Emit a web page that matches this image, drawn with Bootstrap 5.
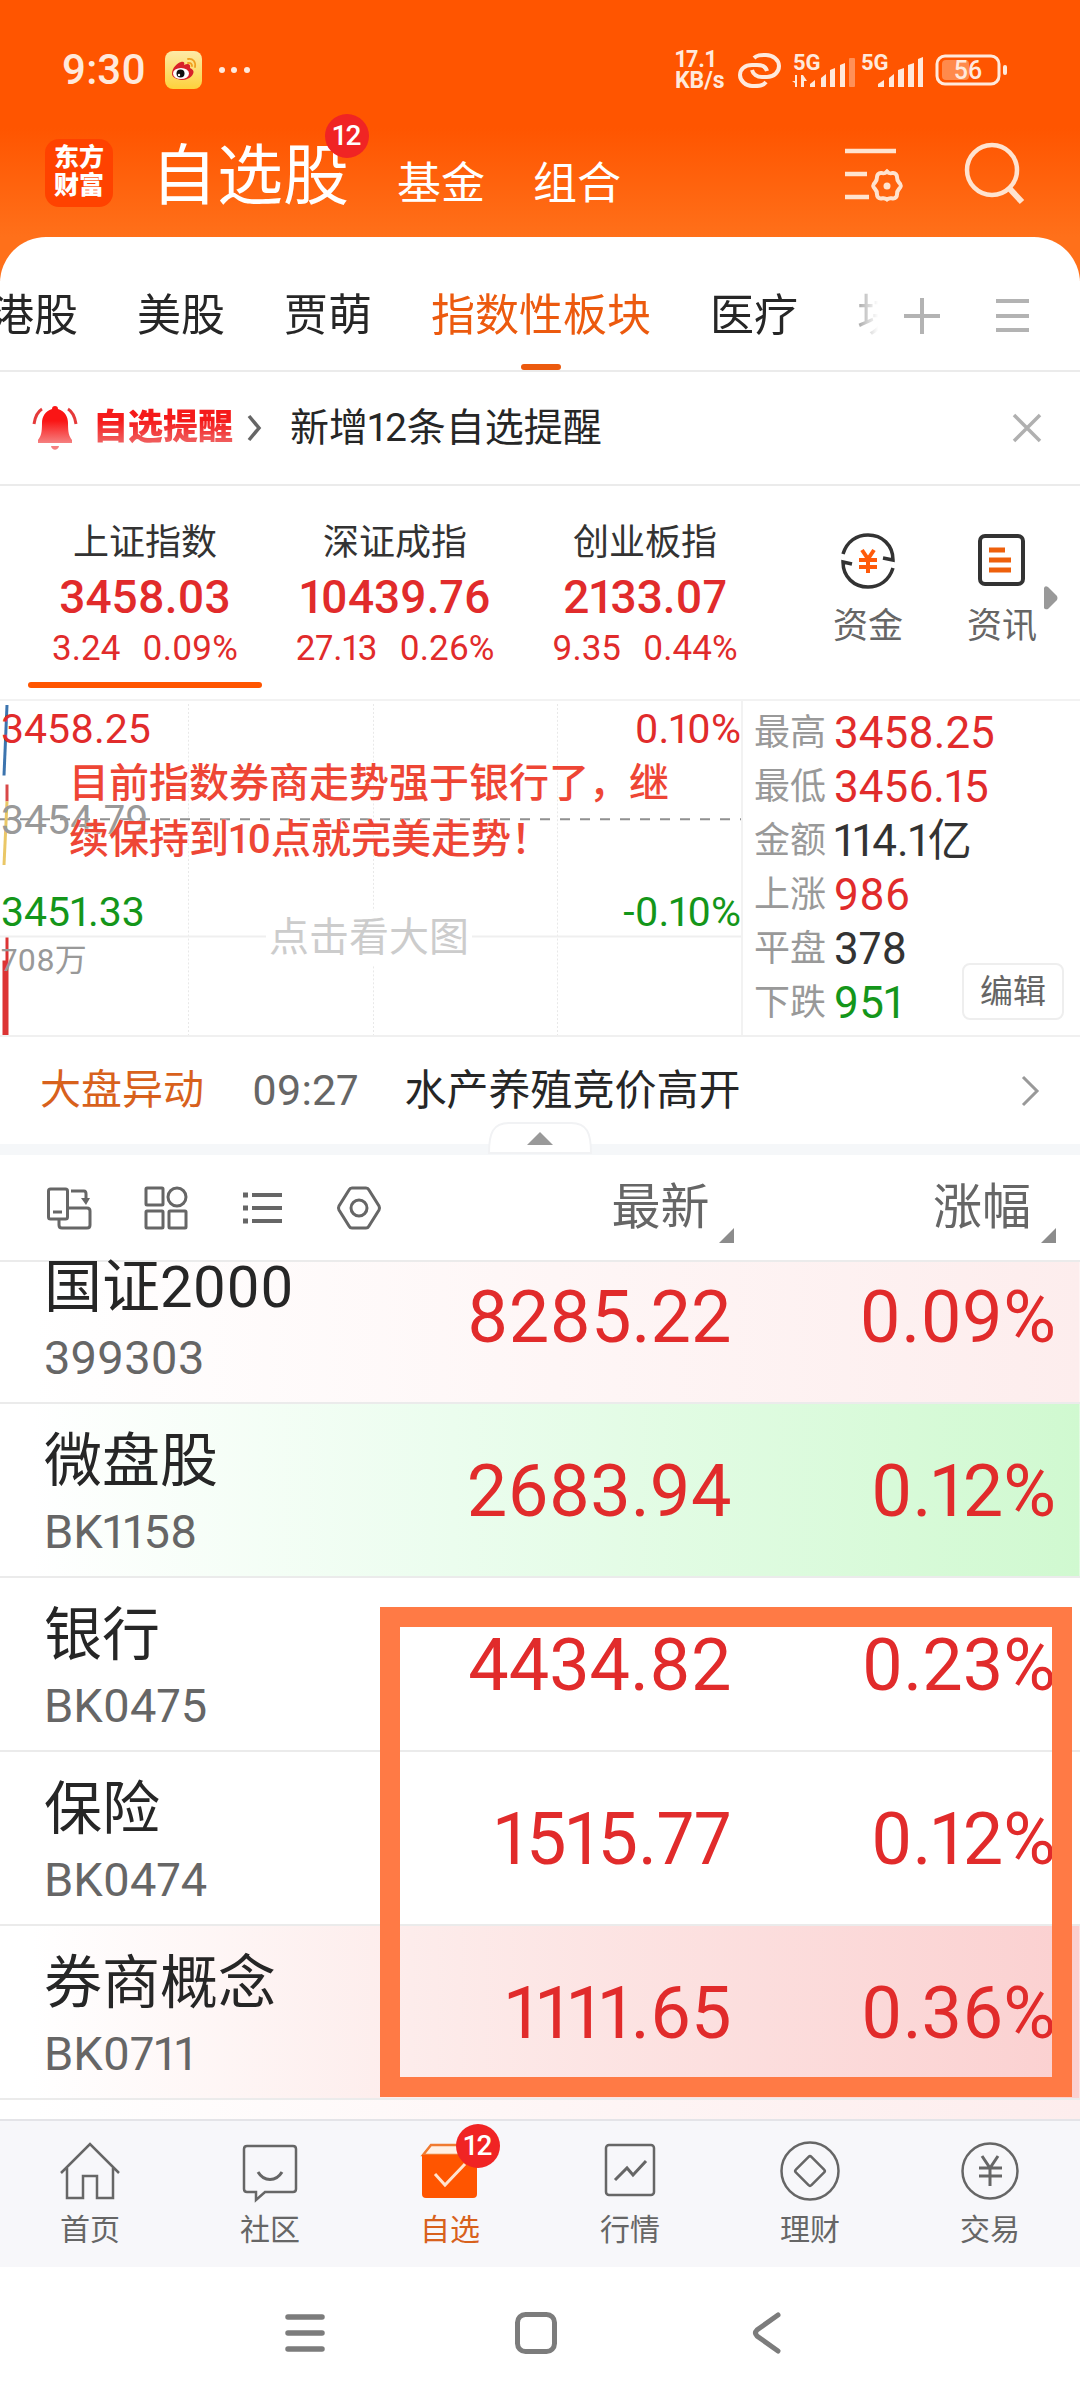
<!DOCTYPE html>
<html lang="zh-CN">
<head>
<meta charset="utf-8">
<meta name="viewport" content="width=device-width, initial-scale=1">
<title>自选股</title>
<link href="https://cdn.jsdelivr.net/npm/bootstrap@5.3.0/dist/css/bootstrap.min.css" rel="stylesheet">
<style>
:root{--up:#e12b2b;--down:#14961a;--ink:#262626;--mute:#666;--soft:#999;--brand:#ff5500;--rule:#ebebeb}
body{font-family:Roboto,"Noto Sans CJK SC",sans-serif;color:var(--ink);background:#fff;font-variant-numeric:proportional-nums}
svg{display:block;flex:none;overflow:visible}
a{color:inherit;text-decoration:none}
button{font:inherit;color:inherit;background:none;border:0;padding:0}
.up{color:var(--up)}.down{color:var(--down)}
.top-zone{background:linear-gradient(#ff5500 0,#ff5500 128px,#ff701a 237px);color:#fff;padding-bottom:44px}
.status{height:100px;padding:40px 71px 0 62px;color:#ffe9dc}
.clock{font-size:42px;line-height:60px;font-weight:500;margin-right:19px}
.rate{font-size:23px;line-height:21px;font-weight:700;width:52px}
.brand-row{height:137px;padding:9px 53px 0 45px}
.logo{width:68px;height:68px;border-radius:14px;background:#ff4200;font-size:25px;line-height:28px;font-weight:900;text-align:center;padding-top:5px}
.modes{gap:48px;margin-left:38px;padding-top:14px;font-size:44px;line-height:76px}
.modes .current{font-size:66px}
.dot{position:absolute;width:44px;height:44px;border-radius:50%;background:#f02424;color:#fff;font-size:28px;line-height:44px;font-weight:500;text-align:center}
.modes .dot{left:174px;top:-25px}
.find{margin-left:60px}
.sheet{background:#fff;border-radius:46px 46px 0 0;margin-top:-44px}
.tabs{height:135px;border-bottom:2px solid var(--rule);padding-right:49px}
.tab-strip{gap:59px;flex:1 1 0;min-width:0;margin-left:-10px;font-size:44px;line-height:106px;white-space:nowrap;padding-top:26px;overflow:hidden;height:133px;-webkit-mask-image:linear-gradient(90deg,#000 calc(100% - 50px),transparent);mask-image:linear-gradient(90deg,#000 calc(100% - 50px),transparent)}
.tab-strip .on{color:#ec5a0e;position:relative;height:107px}
.tab-strip .on::after{content:"";position:absolute;left:50%;margin-left:-20px;bottom:0;width:40px;height:6px;border-radius:3px;background:#ec5a0e}
.tab-btn{margin-top:20px}
.tab-btn+.tab-btn{margin-left:52px}
.alert-row{height:114px;border-bottom:2px solid var(--rule);padding:0 38px 0 32px;font-size:39px}
.alert-name{font-size:35px;font-weight:900;background:linear-gradient(#f51a1a 35%,#f05a5a 75%);-webkit-background-clip:text;background-clip:text;color:transparent;margin:0 14px 0 15px;line-height:50px}
.alert-text{margin-left:27px}
.indices{height:215px;padding-left:20px;border-bottom:2px solid #f2f2f2}
.index-item{width:250px;padding-top:32px;text-align:center;position:relative}
.index-item .nm{font-size:36px;line-height:50px;color:#333}
.index-item .val{font-size:46px;line-height:56px;font-weight:500;padding-top:1px}
.index-item .chg{font-size:35px;line-height:46px;gap:22px;padding-top:1px}
.index-item.on::after{content:"";position:absolute;left:8px;right:8px;bottom:11px;height:6px;border-radius:3px;background:var(--brand)}
.tool{font-size:35px;line-height:50px;color:var(--mute);width:72px;text-align:center}
.tool svg{margin:0 auto 12px}
.tools{padding:46px 42px 0 0;gap:62px;position:relative}
.tools .more{position:absolute;right:22px;top:99px}
.market{height:336px;border-bottom:2px solid #f0f0f0}
.chart{flex:0 0 743px;border-right:2px solid #f2f2f2;position:relative;font-size:41px;line-height:44px}
.chart svg{width:100%;height:100%}
.chart span{position:absolute}
.lab-l{left:1px}.lab-r{right:0}
.y1{top:6px}.y2{top:97px}.y3{top:189px}
.flat{color:var(--soft)}
.vol{top:237px;font-size:32px;color:var(--soft)}
.note{left:69px;top:55px;font-size:40px;font-weight:500;color:#ee4635;line-height:56px;white-space:nowrap;text-shadow:0 0 2px #fff}
.hint{left:266px;top:210px;line-height:54px;color:#ccc;background:#fff;padding:0 3px;font-size:40px}
.stats{padding:5px 0 0 11px;position:relative}
.stats div{line-height:54px;font-size:36px;color:var(--soft);display:flex;align-items:center;gap:8px}
.stats dt,.stats dd{margin:0;font-weight:400}
.stats dd{font-size:44px}
.ink{color:#333}
.edit{position:absolute;right:16px;bottom:15px;width:102px;height:57px;border:2px solid #eee;border-radius:8px;background:#fff;font-size:33px;line-height:52px;color:var(--mute)}
.news{height:107px;padding:0 40px;font-size:42px}
.news .tag{font-size:41px;color:#d8611c;margin-right:48px}
.news .hour{font-size:43px;color:var(--mute);margin-right:46px}
.band{height:11px;background:#f5f7f9;position:relative}
.handle{position:absolute;left:50%;margin-left:-53px;top:-23px}
.watch{position:relative}
.watch table{width:100%;table-layout:fixed;border-collapse:separate;border-spacing:0}
.watch th,.watch td{padding:0;font-weight:400;vertical-align:top;border-bottom:2px solid #ebebeb}
.watch thead th{height:107px;padding-top:18px;color:var(--mute);font-size:49px;line-height:70px}
.icons{padding-left:46px;gap:52px;height:70px}
.sort{gap:10px;align-items:flex-end;margin-left:auto}
.watch tbody th{padding:32px 0 14px 44px}
.watch tbody td{padding-top:43px;text-align:right;font-size:72px;line-height:90px;color:var(--up)}
.watch tr>:last-child{padding-right:24px}
.watch tbody td:nth-child(2){padding-right:3px}
.watch tbody tr:first-child th{padding-top:0}
.watch tbody tr:first-child td{padding-top:11px}
.watch .nm{font-size:58px;line-height:50px}
.watch .code{font-size:47px;line-height:60px;padding-top:16px;color:var(--mute);display:block}
.tint-r1{background:linear-gradient(90deg,#fff 3%,#fdeded)}
.tint-g{background:linear-gradient(90deg,#fff 3%,#ebfdee 42%,#d0f9d0)}
.tint-r2{background:linear-gradient(90deg,#fff 3%,#fdeceb 38%,#fbd0d0)}
.peek{height:19px}
.frame{position:absolute;left:380px;right:8px;top:452px;bottom:22px;border:20px solid #ff7a45;pointer-events:none}
.dock{height:148px;border-top:2px solid #e4e4e8;background:#f7f7fa;color:var(--mute);font-size:30px;line-height:40px}
.dock a{flex:1 1 0;text-align:center;position:relative;padding-top:20px}
.dock svg{margin:0 auto 9px}
.dock .dot{left:50%;margin-left:6px;top:3px}
.dock .on{color:#d8611c}
.sys{height:132px;gap:189px;padding-right:9px}
</style>
<script src="https://cdn.jsdelivr.net/npm/bootstrap@5.3.0/dist/js/bootstrap.bundle.min.js"></script>
</head>
<body>
<header class="top-zone">
  <div class="status d-flex align-items-center">
    <span class="clock">9:30</span>
    <svg width="37" height="38" viewBox="0 0 37 38"><defs><linearGradient id="wb" x2="0" y2="1"><stop stop-color="#fdeaa8"/><stop offset="1" stop-color="#fdd23c"/></linearGradient></defs><rect width="37" height="38" rx="8" fill="url(#wb)"/><path d="M7 23c0-6 5-11 9-12 3-1 4 1 3 3 4-2 7-1 6 3 4 2 4 4 3 6-2 4-7 6-12 6-5-1-9-3-9-6z" fill="#d8202a"/><ellipse cx="16" cy="22.500" rx="8" ry="5.500" fill="#fff"/><circle cx="15.500" cy="22.500" r="4" fill="#111"/><circle cx="14" cy="24" r="1.200" fill="#fff"/><path d="M23 8c5-1 8 3 7 8M23 12c3-.5 4 1 4 3" fill="none" stroke="#f0a020" stroke-width="1.800" stroke-linecap="round"/></svg>
    <svg width="50" height="10" viewBox="0 0 50 10" fill="#ffe9dc"><circle cx="20" cy="5" r="3"/><circle cx="32" cy="5" r="3"/><circle cx="45" cy="5" r="3"/></svg>
    <div class="d-flex align-items-center ms-auto">
      <div class="rate">17.1<br>KB/s</div>
      <svg class="ms-2" width="46" height="36" viewBox="6 0 46 36" fill="none" stroke="#ffe9dc" stroke-width="4"><path d="M25 6c3-3 6-3 12-3 7 0 13 5 13 11s-5 11-12 11h-5c-5 0-9-3-10-7"/><path d="M37 30c-3 4-7 4-14 4-6 0-12-5-12-11s5-10 12-10h5c5 0 9 2 10 6"/></svg>
      <svg class="ms-2" width="70" height="36" viewBox="0 0 70 36" fill="#ffe9dc"><text x="4" y="18" font-size="22" font-weight="700">5G</text><path d="M8 23v12h-2v-4l-3-2h3v-6zM12 23h2l4 6h-3v6h-3z"/><path d="M21 35v-3l5-4v7zM32 35v-9l5-4v13zM41 35V18l5-2v19zM51 35V13l5-2v24z"/><rect x="60" y="6" width="6" height="29" rx="1" opacity=".4"/></svg>
      <svg class="me-1" width="70" height="36" viewBox="0 0 70 36" fill="#ffe9dc"><text x="2" y="18" font-size="22" font-weight="700">5G</text><path d="M19 35v-3l6-4v7zM30 35v-9l5-4v13zM39 35V18l6-2v19zM49 35V13l6-2v24zM59 35V7l5-2v30z"/></svg>
      <svg width="76" height="34" viewBox="0 0 76 34"><rect x="4" y="3" width="62" height="28" rx="8" fill="none" stroke="#ffe9dc" stroke-width="3"/><rect x="9" y="7" width="27" height="20" rx="4" fill="#ff8a4c"/><rect x="70" y="12" width="4" height="10" rx="2" fill="#ffe9dc"/><text x="35" y="26" text-anchor="middle" font-size="25" font-weight="500" fill="#ffe9dc">56</text></svg>
    </div>
  </div>
  <div class="brand-row d-flex align-items-center">
    <div class="logo">东方<br>财富</div>
    <nav class="modes d-flex align-items-baseline">
      <a href="#" class="current position-relative">自选股<span class="dot">12</span></a>
      <a href="#">基金</a>
      <a href="#">组合</a>
    </nav>
    <button class="ms-auto" aria-label="筛选设置"><svg width="60" height="60" viewBox="0 0 60 60" fill="none" stroke="#ffe3cf" stroke-width="4.500"><path d="M2 8h51M2 31h22M2 54h24"/><path d="M44 28.500c2.500 2.500 3 2 5.500 1.500 3-.5 4.500 2 4.500 4 0 3 0 3.500 2 5.500 2.500 2.500 2.500 4 0 6.500-2 2-2 2.500-2 5.500 0 2-1.500 4.500-4.500 4-2.500-.5-3-1-5.500 1-2.500-2-3-1.500-5.500-1-3 .5-4.500-2-4.500-4 0-3 0-3.500-2-5.500-2.500-2.500-2.500-4 0-6.500 2-2 2-2.500 2-5.500 0-2 1.500-4.500 4.500-4 2.500.5 3 1 5.500-1.500z" stroke-width="4"/><circle cx="44" cy="43" r="3.500" fill="#ffe3cf" stroke="none"/></svg></button>
    <button class="find" aria-label="搜索"><svg width="64" height="64" viewBox="0 0 64 64" fill="none" stroke="#ffe3cf" stroke-width="4.500"><circle cx="29" cy="29" r="25"/><path d="M46 47l13 14" stroke-width="6"/></svg></button>
  </div>
</header>

<main class="sheet">
  <div class="tabs d-flex align-items-center">
    <nav class="tab-strip d-flex">
      <a href="#">港股</a><a href="#">美股</a><a href="#">贾萌</a><a href="#" class="on">指数性板块</a><a href="#">医疗</a><a href="#">块</a>
    </nav>
    <button class="tab-btn ms-4" aria-label="添加分组"><svg width="40" height="40" viewBox="0 0 40 40" stroke="#b3b3b3" stroke-width="4"><path d="M2 22h36M20 4v36"/></svg></button>
    <button class="tab-btn" aria-label="分组列表"><svg width="37" height="40" viewBox="0 0 37 40" stroke="#b3b3b3" stroke-width="4"><path d="M2 7h33M2 22h33M2 36h33"/></svg></button>
  </div>

  <div class="alert-row d-flex align-items-center">
    <svg width="46" height="46" viewBox="0 0 46 46"><defs><linearGradient id="bl" x2="0" y2="1"><stop offset=".4" stop-color="#fa1515"/><stop offset="1" stop-color="#f58080"/></linearGradient></defs><path d="M23 1c2 0 3 1 3 3 7 2 10 8 10 14 0 10 1 13 4 17v3H6v-3c3-4 4-7 4-17C10 12 13 6 20 4c0-2 1-3 3-3z" fill="url(#bl)"/><path d="M19 41h8c-1 5-7 5-8 0z" fill="#f58080"/><path d="M10 4C5 7 3 12 2 19M36 4c5 3 7 8 8 15" fill="none" stroke="#e53a3a" stroke-width="3"/></svg>
    <span class="alert-name">自选提醒</span>
    <svg width="16" height="28" viewBox="0 0 16 28" fill="none" stroke="#666" stroke-width="3.500"><path d="M2 2l10 12L2 26"/></svg>
    <span class="alert-text">新增12条自选提醒</span>
    <button class="ms-auto" aria-label="关闭"><svg width="30" height="30" viewBox="0 0 30 30" stroke="#b0b0b0" stroke-width="3.500"><path d="M2 2l26 26M28 2L2 28"/></svg></button>
  </div>

  <div class="indices d-flex">
    <a href="#" class="index-item on"><div class="nm">上证指数</div><div class="val up">3458.03</div><div class="chg up d-flex justify-content-center"><span>3.24</span><span>0.09%</span></div></a>
    <a href="#" class="index-item"><div class="nm">深证成指</div><div class="val up">10439.76</div><div class="chg up d-flex justify-content-center"><span>27.13</span><span>0.26%</span></div></a>
    <a href="#" class="index-item"><div class="nm">创业板指</div><div class="val up">2133.07</div><div class="chg up d-flex justify-content-center"><span>9.35</span><span>0.44%</span></div></a>
    <div class="tools d-flex ms-auto align-items-start">
      <a href="#" class="tool"><svg width="58" height="58" viewBox="0 0 58 58" fill="none"><g stroke="#333" stroke-width="3.500"><path d="M4 22C8 9 18 3 29 3c14 0 25 10 25 25l-10-2M54 36C50 49 40 55 29 55 15 55 4 45 4 30l9 2"/></g><path d="M23 18l6 9 6-9M20 28h18M20 35h18M29 27v14" stroke="#ff5a0a" stroke-width="4"/></svg>资金</a>
      <a href="#" class="tool"><svg width="58" height="58" viewBox="0 0 58 58" fill="none"><rect x="7" y="4" width="43" height="48" rx="5" stroke="#333" stroke-width="4"/><path d="M16 18h16M16 28h22M16 38h22" stroke="#ee600c" stroke-width="5"/></svg>资讯</a>
      <svg class="more" width="14" height="26" viewBox="0 0 14 26"><path d="M0 3q1-3 4-1l9 9q1 2 0 4l-9 9q-3 1-4-1z" fill="#999"/></svg>
    </div>
  </div>

  <div class="market d-flex">
    <div class="chart">
      <svg viewBox="0 0 741 336" preserveAspectRatio="none" fill="none">
        <path d="M188.500 3v333M373.500 3v333M557.500 3v333" stroke="#e8e8e8" stroke-width="1" stroke-dasharray="2 2"/>
        <path d="M0 237h741" stroke="#efefef" stroke-width="2"/>
        <path d="M0 119h741" stroke="#909090" stroke-width="2" stroke-dasharray="10 10"/>
        <path d="M7 4L4 75" stroke="#3c74ae" stroke-width="3"/>
        <path d="M7 84v17" stroke="#d84848" stroke-width="3"/>
        <path d="M7 101L4 165" stroke="#eac766" stroke-width="3"/>
        <path d="M7 238v98M4 261v75" stroke="#dc3434" stroke-width="3"/>
      </svg>
      <span class="lab-l y1 up">3458.25</span><span class="lab-r y1 up">0.10%</span>
      <span class="lab-l y2 flat">3454.79</span>
      <span class="lab-l y3 down">3451.33</span><span class="lab-r y3 down">-0.10%</span>
      <span class="lab-l vol">708万</span>
      <span class="hint">点击看大图</span>
      <span class="note">目前指数券商走势强于银行了，继<br>续保持到10点就完美走势！</span>
    </div>
    <dl class="stats flex-grow-1 mb-0">
      <div><dt>最高</dt><dd class="up">3458.25</dd></div>
      <div><dt>最低</dt><dd class="up">3456.15</dd></div>
      <div><dt>金额</dt><dd class="ink">114.1亿</dd></div>
      <div><dt>上涨</dt><dd class="up">986</dd></div>
      <div><dt>平盘</dt><dd class="ink">378</dd></div>
      <div><dt>下跌</dt><dd class="down">951</dd></div>
      <button class="edit">编辑</button>
    </dl>
  </div>

  <a href="#" class="news d-flex align-items-center">
    <span class="tag">大盘异动</span><span class="hour">09:27</span><span>水产养殖竞价高开</span>
    <svg class="ms-auto" width="20" height="32" viewBox="0 0 20 32" fill="none" stroke="#999" stroke-width="3"><path d="M3 2l14 14L3 30"/></svg>
  </a>
  <div class="band"><svg class="handle" width="106" height="34" viewBox="0 0 106 34"><path d="M2 32C2 12 6 2 22 2h62c16 0 20 10 20 30z" fill="#fff" stroke="#f1f2f4" stroke-width="2"/><path d="M40 24l13-13 13 13z" fill="#999"/></svg></div>

  <section class="watch">
    <table>
      <colgroup><col style="width:35%"><col style="width:33%"><col style="width:32%"></colgroup>
      <thead><tr>
        <th><div class="icons d-flex align-items-center">
          <button aria-label="横屏"><svg width="46" height="46" viewBox="0 0 46 46" fill="none" stroke="#666" stroke-width="3"><rect x="2.500" y="4" width="19" height="30" rx="2"/><path d="M7 27h9M13 34v6q0 3 3 3h25q3 0 3-3V26q0-3-3-3H22M25 6h13q2 0 2 3v6"/><path d="M35 13h9l-4 7z" fill="#666" stroke="none"/></svg></button>
          <button aria-label="宫格"><svg width="44" height="46" viewBox="0 0 44 46" fill="none" stroke="#666" stroke-width="3"><rect x="2" y="3" width="17" height="17" rx="1"/><circle cx="33" cy="12" r="9"/><rect x="2" y="26" width="17" height="17" rx="1"/><rect x="25" y="26" width="17" height="17" rx="1"/></svg></button>
          <button aria-label="列表"><svg width="44" height="46" viewBox="0 0 44 46" fill="none" stroke="#666" stroke-width="4"><path d="M12 10h30M12 23h30M12 36h30"/><path d="M3 10h5M3 23h5M3 36h5" stroke-width="5"/></svg></button>
          <button aria-label="设置"><svg width="46" height="46" viewBox="0 0 46 46" fill="none" stroke="#666" stroke-width="3"><path d="M13 5q1-2 3-2h14q2 0 3 2l10 16q1 2 0 4L33 41q-1 2-3 2H16q-2 0-3-2L3 25q-1-2 0-4z"/><circle cx="23" cy="23" r="8"/></svg></button>
        </div></th>
        <th><button class="sort d-flex">最新<svg width="15" height="15" viewBox="0 0 15 15"><path d="M15 0v15H0z" fill="#8c8c8c"/></svg></button></th>
        <th><button class="sort d-flex">涨幅<svg width="15" height="15" viewBox="0 0 15 15"><path d="M15 0v15H0z" fill="#8c8c8c"/></svg></button></th>
      </tr></thead>
      <tbody>
        <tr class="tint-r1"><th scope="row"><div class="nm">国证2000</div><span class="code">399303</span></th><td>8285.22</td><td>0.09%</td></tr>
        <tr class="tint-g"><th scope="row"><div class="nm">微盘股</div><span class="code">BK1158</span></th><td>2683.94</td><td>0.12%</td></tr>
        <tr><th scope="row"><div class="nm">银行</div><span class="code">BK0475</span></th><td>4434.82</td><td>0.23%</td></tr>
        <tr><th scope="row"><div class="nm">保险</div><span class="code">BK0474</span></th><td>1515.77</td><td>0.12%</td></tr>
        <tr class="tint-r2"><th scope="row"><div class="nm">券商概念</div><span class="code">BK0711</span></th><td>1111.65</td><td>0.36%</td></tr>
      </tbody>
    </table>
    <div class="peek tint-r1"></div>
    <div class="frame"></div>
  </section>
</main>

<nav class="dock d-flex">
  <a href="#"><svg width="60" height="60" viewBox="0 0 60 60" fill="none" stroke="#666" stroke-width="2.500"><path d="M1 32L30 3l29 29M7 27v30h16V35h14v22h16V27"/></svg>首页</a>
  <a href="#"><svg width="60" height="60" viewBox="0 0 60 60" fill="none" stroke="#666" stroke-width="2.500"><path d="M7 5h46q3 0 3 3v40q0 3-3 3H25l-9 8v-8H7q-3 0-3-3V8q0-3 3-3z"/><path d="M18 31c6 10 18 10 24 0" stroke-width="3"/></svg>社区</a>
  <a href="#" class="on"><svg width="60" height="60" viewBox="0 0 60 60" fill="none"><path d="M3 14L11 4h44v10z" fill="#fff0e4" stroke="#f07a30" stroke-width="2.500"/><path d="M2 14h55v39q0 4-4 4H6q-4 0-4-4z" fill="#ff5500"/><path d="M15 33l10 11 20-21" stroke="#ffe3cf" stroke-width="3"/></svg>自选<span class="dot">12</span></a>
  <a href="#"><svg width="60" height="60" viewBox="0 0 60 60" fill="none" stroke="#666" stroke-width="2.500"><rect x="6" y="4" width="48" height="50" rx="3"/><path d="M15 39l12-12 6 7 13-14" stroke-width="3"/></svg>行情</a>
  <a href="#"><svg width="60" height="60" viewBox="0 0 60 60" fill="none" stroke="#666" stroke-width="2.500"><circle cx="30" cy="30" r="28.500"/><rect x="19" y="19" width="22" height="22" rx="2" transform="rotate(45 30 30)"/></svg>理财</a>
  <a href="#"><svg width="60" height="60" viewBox="0 0 60 60" fill="none" stroke="#666" stroke-width="2.500"><circle cx="30" cy="30" r="27.500"/><path d="M22 15l8 12 8-12M19 27h23M19 35h23M30 27v18" stroke-width="3"/></svg>交易</a>
</nav>

<div class="sys d-flex justify-content-center align-items-center">
  <button aria-label="最近任务"><svg width="42" height="42" viewBox="0 0 42 42" stroke="#7c7c7c" stroke-width="5.500" stroke-linecap="round"><path d="M4 5h34M4 21h34M4 37h34"/></svg></button>
  <button aria-label="主屏幕"><svg width="42" height="42" viewBox="0 0 42 42" fill="none" stroke="#7c7c7c" stroke-width="5"><rect x="2.500" y="2.500" width="37" height="37" rx="8"/></svg></button>
  <button aria-label="返回"><svg width="42" height="42" viewBox="0 0 42 42" fill="none" stroke="#7c7c7c" stroke-width="5" stroke-linecap="round"><path d="M32 3L11 18q-3 3 0 6l21 15"/></svg></button>
</div>
</body>
</html>
